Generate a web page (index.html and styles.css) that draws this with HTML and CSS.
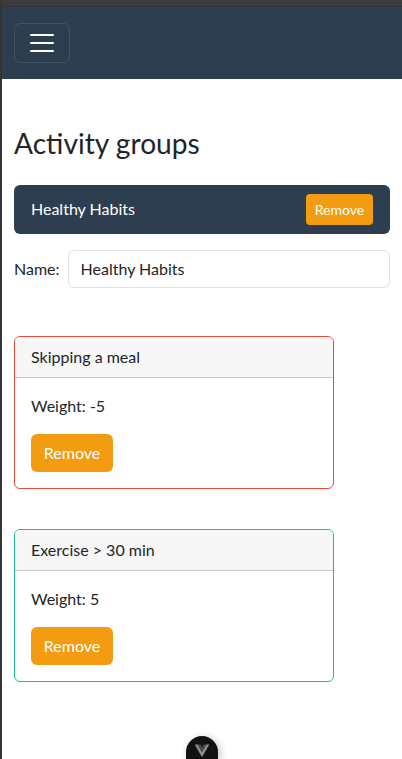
FILE: index.html
```html
<!DOCTYPE html>
<html lang="en">
<head>
<meta charset="utf-8">
<meta name="viewport" content="width=device-width, initial-scale=1">
<title>Activity groups</title>
<link rel="stylesheet" href="styles.css">
</head>
<body>
<div class="frame">
  <nav class="navbar">
    <button class="toggler" type="button" aria-label="Menu">
      <svg width="30" height="30" viewBox="0 0 30 30"><path d="M4 7h22M4 15h22M4 23h22" stroke="#fff" stroke-width="2" stroke-linecap="round" stroke-miterlimit="10"/></svg>
    </button>
  </nav>
  <main class="container">
    <h1 class="title">Activity groups</h1>
    <div class="group">
      <span>Healthy Habits</span>
      <button class="btn btn-sm" type="button">Remove</button>
    </div>
    <div class="field">
      <label for="name">Name:</label>
      <input id="name" class="input" type="text" value="Healthy Habits">
    </div>
    <section class="card card-danger">
      <div class="card-header">Skipping a meal</div>
      <div class="card-body">
        <p class="weight">Weight: -5</p>
        <button class="btn" type="button">Remove</button>
      </div>
    </section>
    <section class="card card-success">
      <div class="card-header">Exercise &gt; 30 min</div>
      <div class="card-body">
        <p class="weight">Weight: 5</p>
        <button class="btn" type="button">Remove</button>
      </div>
    </section>
  </main>
</div>
<div class="devtools">
  <svg width="16" height="14" viewBox="0 0 16 14"><path d="M.7.5h3L8 8 12.300.5h3L8 13.300z" fill="#8c8c8c"/><path d="M3.700.5h2.700L8 3.200 9.600.5h2.700L8 8z" fill="#484848"/></svg>
</div>
</body>
</html>
```
FILE: styles.css
```css
* { box-sizing: border-box; }
body {
  margin: 0;
  height: 759px;
  overflow: hidden;
  background: #fff;
  color: #212529;
  font: 16px/24px Lato, sans-serif;
}
.frame {
  height: 759px;
  border-top: 6px solid #3b3b3b;
  border-left: 2px solid #333;
}
.navbar {
  height: 73px;
  padding: 16px 12px;
  border-top: 1px solid #2c3238;
  background: #2c3e50;
}
.toggler {
  display: flex;
  align-items: center;
  justify-content: center;
  width: 56px;
  height: 40px;
  padding: 0;
  border: 1px solid rgba(255, 255, 255, .1);
  border-radius: 6px;
  background: transparent;
}
.container { padding: 48px 12px 0; }
.title {
  margin: 0 0 26px;
  font-size: 28.15px;
  font-weight: 400;
  line-height: 32px;
}
.group {
  display: flex;
  align-items: center;
  justify-content: space-between;
  height: 49px;
  padding: 0 17px;
  border-radius: 6px;
  background: #2c3e50;
  color: #fff;
}
.group span { padding-bottom: 1px; }
.field {
  display: flex;
  align-items: center;
  gap: 8px;
  margin: 16px 0 48px;
}
.input {
  flex: 1;
  min-width: 0;
  height: 38px;
  padding: 5px 12px 7px;
  border: 1px solid #dee2e6;
  border-radius: 6px;
  background: #fff;
  color: #212529;
  font: inherit;
}
.card {
  width: 320px;
  height: 153px;
  margin-bottom: 40px;
  border: 1px solid;
  border-radius: 6px;
  overflow: hidden;
}
.card-danger { border-color: #e74c3c; }
.card-success { border-color: #18bc9c; }
.card-header {
  padding: 8px 16px;
  border-bottom: 1px solid #c8c8c8;
  background: #f7f7f7;
}
.card-body { padding: 16px; }
.weight { margin: 0 0 16px; }
.btn {
  display: block;
  width: 82px;
  height: 38px;
  padding: 0;
  border: 0;
  border-radius: 6px;
  background: #f39c12;
  color: #fff;
  font: inherit;
}
.btn-sm {
  width: 67px;
  height: 31px;
  border-radius: 4px;
  font-size: 14px;
  line-height: 21px;
}
.devtools {
  position: absolute;
  left: 186px;
  top: 736px;
  display: flex;
  justify-content: center;
  width: 32px;
  height: 23px;
  padding-top: 8px;
  border-radius: 16px 16px 0 0;
  background: #121212;
  box-shadow: 2px 2px 8px rgba(0, 0, 0, .25);
}
```
